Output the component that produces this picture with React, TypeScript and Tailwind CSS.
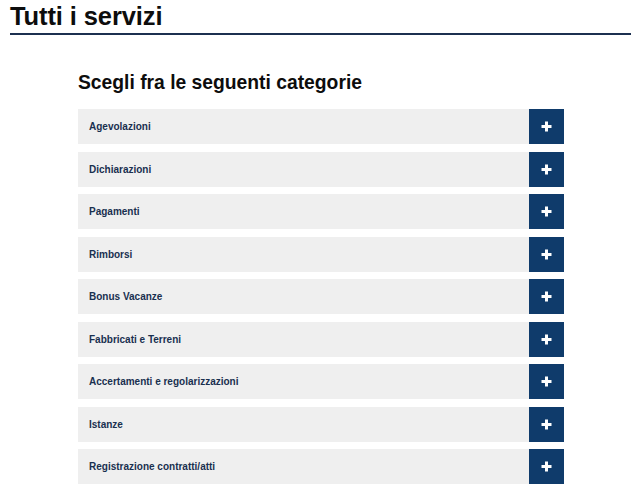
import React from "react";

const items = [
  "Agevolazioni",
  "Dichiarazioni",
  "Pagamenti",
  "Rimborsi",
  "Bonus Vacanze",
  "Fabbricati e Terreni",
  "Accertamenti e regolarizzazioni",
  "Istanze",
  "Registrazione contratti/atti",
];

function Plus() {
  return (
    <svg width="11" height="11" viewBox="0 0 11 11" aria-hidden="true">
      <rect x="4" y="0.5" width="3" height="10" fill="#ffffff" />
      <rect x="0.5" y="4" width="10" height="3" fill="#ffffff" />
    </svg>
  );
}

export default function App() {
  return (
    <div
      className="w-[640px] h-[489px] bg-white overflow-hidden"
      style={{ fontFamily: '"Liberation Sans", Arial, sans-serif' }}
    >
      <div className="ml-[10px] mr-[9px] pt-[1px] border-b-2 border-[#1c3050]">
        <h1 className="text-[25.5px] leading-[30px] font-bold text-[#0d0d0d] pb-[2px] tracking-[-0.1px]">
          Tutti i servizi
        </h1>
      </div>
      <div className="ml-[78px] w-[486px] mt-[37px]">
        <h2 className="text-[19.3px] leading-[22px] font-bold text-[#0d0d0d]">
          Scegli fra le seguenti categorie
        </h2>
        <div className="mt-[15px] flex flex-col gap-[7.5px]">
          {items.map((it) => (
            <div key={it} className="flex h-[35px] bg-[#efefef]">
              <div className="flex-1 flex items-center pl-[11px] text-[10px] font-bold text-[#19304f]">
                {it}
              </div>
              <div className="w-[35px] flex items-center justify-center bg-[#0f3b6b]">
                <Plus />
              </div>
            </div>
          ))}
        </div>
      </div>
    </div>
  );
}
